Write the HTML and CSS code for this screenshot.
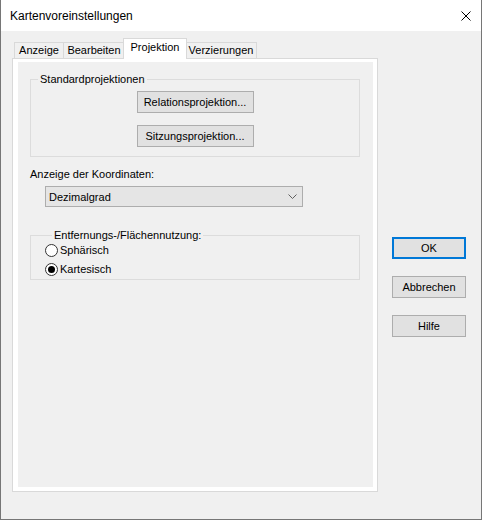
FILE: index.html
```html
<!DOCTYPE html>
<html lang="de">
<head>
    <meta charset="UTF-8">
    <title>Kartenvoreinstellungen</title>
    <link rel="stylesheet" href="styles.css">
</head>
<body>
    <div class="window">
        <div class="titlebar">
            <span class="title">Kartenvoreinstellungen</span>
            <svg class="close" width="10" height="10" viewBox="0 0 10 10">
                <path d="M0.5 0.5 L9.5 9.5 M9.5 0.5 L0.5 9.5" stroke="#000" stroke-width="1" fill="none"/>
            </svg>
        </div>

        <div class="dialog">
            <!-- tab control -->
            <div class="tabctl">
                <div class="tabstrip">
                    <div class="tab tab-anzeige">Anzeige</div>
                    <div class="tab tab-bearbeiten">Bearbeiten</div>
                    <div class="tab tab-active">Projektion</div>
                    <div class="tab tab-verz">Verzierungen</div>
                </div>
                <div class="panel">
                    <div class="page">
                        <fieldset class="group group-std">
                            <legend>Standardprojektionen</legend>
                            <button class="btn btn-proj">Relationsprojektion...</button>
                            <button class="btn btn-proj">Sitzungsprojektion...</button>
                        </fieldset>

                        <div class="label">Anzeige der Koordinaten:</div>
                        <div class="combo">
                            <span>Dezimalgrad</span>
                            <svg width="9" height="5" viewBox="0 0 9 5">
                                <polyline points="0.5,0.5 4.5,4.5 8.5,0.5" stroke="#606060" stroke-width="1" fill="none"/>
                            </svg>
                        </div>

                        <fieldset class="group group-dist">
                            <legend>Entfernungs-/Flächennutzung:</legend>
                            <label class="radio"><span class="dot"></span>Sphärisch</label>
                            <label class="radio checked"><span class="dot"></span>Kartesisch</label>
                        </fieldset>
                    </div>
                </div>
            </div>

            <!-- dialog buttons -->
            <div class="actions">
                <button class="btn btn-side btn-default">OK</button>
                <button class="btn btn-side">Abbrechen</button>
                <button class="btn btn-side">Hilfe</button>
            </div>
        </div>
    </div>
</body>
</html>
```

FILE: styles.css
```css
body {
    margin: 0;
    font-family: "Liberation Sans", Arial, sans-serif;
    font-size: 11px;
    color: #000;
}
.window {
    width: 482px;
    height: 520px;
    box-sizing: border-box;
    border: 1px solid #767676;
    border-top: none;
    background: #f0f0f0;
}
.titlebar {
    height: 31px;
    background: #fff;
    display: flex;
    align-items: center;
    padding-left: 9px;
    padding-right: 10px;
}
.title {
    font-family: "Liberation Sans", Arial, sans-serif;
    font-size: 12px;
    flex: 1;
}
.close {
    display: block;
}
.dialog {
    display: flex;
    padding: 7px 0 0 11px;
}

/* tabs */
.tabctl {
    width: 366px;
}
.tabstrip {
    display: flex;
    align-items: flex-end;
    height: 20px;
    padding-left: 2px;
}
.tab {
    height: 16px;
    box-sizing: border-box;
    border: 1px solid #d9d9d9;
    border-bottom: none;
    border-left: none;
    line-height: 15px;
    text-align: center;
}
.tab-anzeige {
    width: 50px;
    border-left: 1px solid #d9d9d9;
}
.tab-bearbeiten {
    width: 61px;
}
.tab-active {
    width: 64px;
    height: 21px;
    margin: 0 -1px -1px -2px;
    border-left: 1px solid #d9d9d9;
    background: #fff;
    line-height: 17px;
    position: relative;
    z-index: 1;
}
.tab-verz {
    width: 71px;
}
.panel {
    height: 434px;
    box-sizing: border-box;
    border: 1px solid #d9d9d9;
    background: #fff;
    padding: 3px 4px 4px 5px;
}
.page {
    height: 100%;
    background: #f0f0f0;
    padding: 11px 12px 0 12px;
    box-sizing: border-box;
}

/* group boxes */
.group {
    margin: 0;
    padding: 0;
    border: 1px solid #dcdcdc;
    min-width: 0;
    width: 330px;
    box-sizing: border-box;
}
.group legend {
    margin-left: 7px;
    padding: 0 2px;
    line-height: 13px;
}
.group-std {
    display: flex;
    flex-direction: column;
    align-items: center;
    gap: 12px;
    padding: 5px 0 9px;
}
.label {
    margin-top: 11px;
    line-height: 13px;
}
.combo {
    margin: 5px 0 0 15px;
    width: 258px;
    height: 21px;
    box-sizing: border-box;
    border: 1px solid #adadad;
    background: #e5e5e5;
    display: flex;
    align-items: center;
    justify-content: space-between;
    padding: 0 5px 0 3px;
}
.group-dist {
    margin-top: 22px;
    padding: 2px 0 3px 14px;
}
.radio {
    display: flex;
    align-items: center;
    height: 13px;
    line-height: 13px;
}
.radio + .radio {
    margin-top: 6px;
}
.dot {
    width: 13px;
    height: 13px;
    box-sizing: border-box;
    border: 1px solid #333;
    border-radius: 50%;
    background: #fff;
    margin-right: 2px;
    display: flex;
    align-items: center;
    justify-content: center;
}
.checked .dot::after {
    content: "";
    width: 7px;
    height: 7px;
    border-radius: 50%;
    background: #000;
}

/* buttons */
.btn {
    font-family: "Liberation Sans", Arial, sans-serif;
    font-size: 11px;
    color: #000;
    background: #e1e1e1;
    border: 1px solid #adadad;
    padding: 0;
    box-sizing: border-box;
}
.btn-proj {
    width: 117px;
    height: 22px;
}
.actions {
    display: flex;
    flex-direction: column;
    gap: 17px;
    margin: 199px 0 0 14px;
}
.btn-side {
    width: 74px;
    height: 22px;
}
.btn-default {
    border: 2px solid #0078d7;
}
```
